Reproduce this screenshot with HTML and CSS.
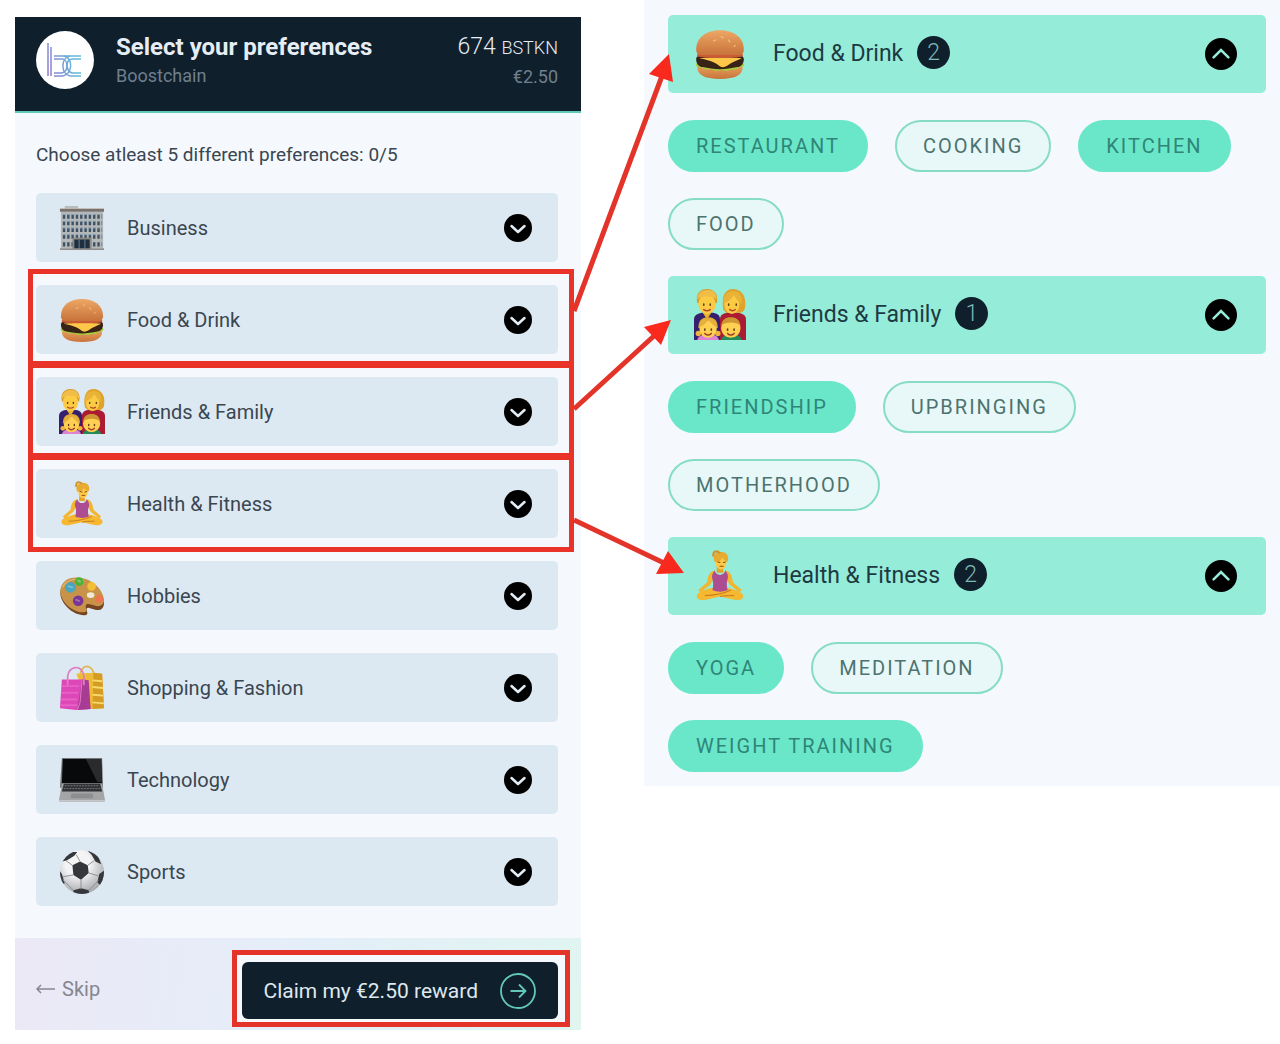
FILE: index.html
```html
<!DOCTYPE html>
<html lang="en">
<head>
    <meta charset="UTF-8">
    <meta name="viewport" content="width=device-width, initial-scale=1.0">
    <title>Select your preferences - Boostchain</title>
    <link rel="stylesheet" href="styles.css">
</head>
<body>

    <!-- Shared icons -->
    <svg class="sprite" aria-hidden="true">
        <symbol id="chevron-down" viewBox="0 0 28 28">
            <circle cx="14" cy="14" r="14" fill="#000"/>
            <path d="M7.500 12 14 18l6.500-6" fill="none" stroke="#e3edf5" stroke-width="2.500" stroke-linecap="round" stroke-linejoin="round"/>
        </symbol>
        <symbol id="chevron-up" viewBox="0 0 28 28">
            <circle cx="14" cy="14" r="14" fill="#000"/>
            <path d="M7.500 17 14 10.500l6.500 6.500" fill="none" stroke="#95ecd9" stroke-width="2.200" stroke-linecap="round"/>
        </symbol>

        <symbol id="business" viewBox="0 0 48 48">
            <path d="M6 1h14v4H6z" fill="#b9bcbd"/>
            <path d="M2 7h44v38H2z" fill="#b5b8b8"/>
            <path d="M1 4h46v3H1z" fill="#77716d"/>
            <path d="M1 3h46v1H1z" fill="#c3bbb2"/>
            <path d="M4 12h41M4 19h41M4 26h41M4 33h41M4 41h41" stroke="#3d5064" stroke-width="4.500" stroke-dasharray="2.500 2"/>
            <path d="M4 10h41M4 17h41M4 24h41M4 31h41" stroke="#8ba8bd" stroke-width="1" stroke-dasharray="2.500 2"/>
            <path d="M14 34h20v12H14z" fill="#8a8984"/>
            <path d="M16 36h16v10H16z" fill="#1f2f40"/>
            <path d="M21 36v10M27 36v10" stroke="#6d8399" stroke-width="1"/>
            <path d="M1 45h46v2H1z" fill="#8f8e8a"/>
        </symbol>

        <symbol id="burger" viewBox="0 0 48 48">
            <defs>
                <linearGradient id="bun" x1="0" y1="0" x2="0" y2="1">
                    <stop offset="0" stop-color="#eda765"/>
                    <stop offset="1" stop-color="#c8733a"/>
                </linearGradient>
            </defs>
            <path d="M3 36c0 7 6 11 21 11s21-4 21-11l-7-3H10z" fill="url(#bun)"/>
            <path d="M1.500 34c1-3 5-4 9-3h27c4-1 8 0 9 3-1 3-4 1-6 3-3 3-5 0-8 2-3 2-5-1-8 0-4 1-6 0-8-1-3-1-5 2-8-1-2-1-6 0-7-3z" fill="#a4cf3b"/>
            <path d="M2 29c0-3 3-4 6-4h32c3 0 6 1 6 4s-2 7-6 7c-5 1-11 2-16 2s-11-1-16-2c-4 0-6-4-6-7z" fill="#392216"/>
            <path d="M5 28c5-1 34-1 39 0-5 2-9 4-12 6-4 3-7 3-10 0-4-3-11-5-17-6z" fill="#ffc747"/>
            <path d="M3 24c5-3 37-3 42 0v2c-5 2-37 2-42 0z" fill="#cb5934"/>
            <path d="M2 20C2 8 12 2 24 2s22 6 22 18c0 3-2 5-5 5H7c-3 0-5-2-5-5z" fill="url(#bun)"/>
            <path d="m25 8 2 1M32 11l1 2M18 12l2-1M37 17l1-1" stroke="#f2c187" stroke-width="1" stroke-linecap="round"/>
        </symbol>

        <symbol id="family" viewBox="0 0 48 48">
            <path d="M0 47V28c0-4 4-6 9-6h7c5 0 8 2 8 6v19z" fill="#35206f"/>
            <path d="M24 47V28c0-4 3-6 8-6h7c5 0 9 2 9 6v19z" fill="#ab1b33"/>
            <path d="m8 22 4 6 4-6z" fill="#e9b52e"/>
            <path d="M27 19C25 6 29 0 36 0s13 6 11 17c0 3-3 5-5 5H30z" fill="#dfa22a"/>
            <path d="M3 13C1 4 6 0 12 0s11 4 9 13z" fill="#d69c2b"/>
            <ellipse cx="12" cy="14" rx="8" ry="9" fill="#fbcb43"/>
            <ellipse cx="35" cy="14" rx="7" ry="9" fill="#fbcb43"/>
            <path d="M3 10C3 3 8 1 13 1c5 0 8 3 8 9-3-3-6-3-9-3-4 0-6 0-9 3z" fill="#efbd48"/>
            <path d="M27 13c5-1 8-4 10-8 1 4 4 6 7 9 1-9-3-12-8-12-6 0-9 5-9 11z" fill="#e9b33a"/>
            <path d="M9 14v1M15 14v1M32 14v1M39 14v1" stroke="#664014" stroke-width="1.500" stroke-linecap="round"/>
            <path d="M9 19q3 2 6 0M33 19q3 2 5 0" fill="none" stroke="#b6462b" stroke-width="1.400" stroke-linecap="round"/>
            <path d="M3 47c1-4 5-5 10-5s9 1 10 5z" fill="#dd82d2"/>
            <path d="M25 47c1-4 5-5 10-5s8 1 9 5z" fill="#25895a"/>
            <circle cx="4" cy="41" r="2.500" fill="#eeb53a"/>
            <circle cx="22" cy="41" r="2.500" fill="#eeb53a"/>
            <path d="M4 36c0-8 4-10 9-10s9 2 9 10z" fill="#d89f2c"/>
            <ellipse cx="13" cy="37" rx="8" ry="8" fill="#ffd052"/>
            <path d="M5 35c4-1 7-4 8-7 2 3 5 6 8 7 0-7-4-8-8-8s-8 1-8 8z" fill="#e6b03c"/>
            <ellipse cx="34" cy="36" rx="9" ry="9" fill="#ffd052"/>
            <path d="M25 34c1-6 4-8 9-8s8 2 9 8c-4-4-14-4-18 0z" fill="#cf9733"/>
            <path d="M10 37v1M16 37v1M31 37v1M37 37v1" stroke="#664014" stroke-width="1.500" stroke-linecap="round"/>
            <path d="M10 41q3 3 6 0M31 41q3 3 6 0" fill="none" stroke="#a13e26" stroke-width="1.400" stroke-linecap="round"/>
        </symbol>

        <symbol id="yoga" viewBox="0 0 48 48">
            <path d="M19 19c-5 1-6 5-7 11l-8 7 2 2 9-7 5-9zM29 19c5 1 6 5 7 11l8 7-2 2-9-7-5-9z" fill="#f2b52d"/>
            <path d="M21 14h6v7h-6z" fill="#e5a428"/>
            <path d="M16 35c-5 1-12 4-13 6-2 4 3 6 8 5l13-3 13 3c5 1 10-1 8-5-1-2-8-5-13-6z" fill="#f6b731"/>
            <path d="M10 42c8 0 18-2 24-5M24 43c4-1 8-1 13-1" fill="none" stroke="#c87c20" stroke-width="1"/>
            <path d="M19 19c1 3 3 4 5 4s4-1 5-4c2 3 3 5 2 8-1 3-1 6 0 10-4 2-10 2-14 0 1-4 1-7 0-10-1-3 0-5 2-8z" fill="#ac4c91"/>
            <ellipse cx="25" cy="11" rx="5" ry="7" fill="#ffc948"/>
            <path d="M19 11c-2-5 0-9 5-9 6-1 9 4 7 9-2-1-4-2-5-4-1 3-3 4-7 4z" fill="#e8ab31"/>
            <path d="M18 6c-1-5 3-6 6-3" fill="none" stroke="#d39228" stroke-width="2"/>
            <path d="m22 11 2 .500M27 11.500l2-.500M24 15h3" stroke="#86521c" stroke-width="1" stroke-linecap="round"/>
        </symbol>

        <symbol id="palette" viewBox="0 0 48 48">
            <path d="M2 17C5 7 16 4 27 8c10 3 19 12 20 23 0 7-5 9-10 7-4-1-7-3-8-1-1 3 3 6-2 7C14 45-2 29 2 17z" fill="#754521"/>
            <path d="M2 15C5 5 16 3 27 6c10 3 19 12 20 22 0 6-5 8-10 6-4-1-8-3-9 0-1 3 3 6-2 7C14 42-2 27 2 15z" fill="#c89248"/>
            <path d="M4 15C7 7 16 5 26 8" fill="none" stroke="#e1b46e" stroke-width="1.500"/>
            <ellipse cx="33" cy="23" rx="4" ry="3" fill="#efe9d8"/>
            <circle cx="12" cy="15" r="5.500" fill="#47a6bd"/>
            <circle cx="21" cy="9" r="4.500" fill="#4db338"/>
            <circle cx="34" cy="14" r="4.500" fill="#f5bf35"/>
            <ellipse cx="42" cy="27" rx="4" ry="4" fill="#ec7552"/>
            <circle cx="20" cy="29" r="5.500" fill="#783796"/>
            <path d="m10 14 4 1M20 8l2 1M18 28l3 1" stroke="#fff" stroke-opacity=".300" stroke-width="2" stroke-linecap="round"/>
        </symbol>

        <symbol id="bags" viewBox="0 0 48 48">
            <path d="M22 12C22-2 36-2 37 12" fill="none" stroke="#ddb64f" stroke-width="1.800"/>
            <path d="m18 9 18-1 9 1 2 36-14 1z" fill="#eebb36"/>
            <path d="m36 8 9 1 2 36-12 1z" fill="#d49b25"/>
            <path d="m35 16 10 1M35 23l11 1M35 31l11 1M35 39l12 1" stroke="#f7da69" stroke-width="2"/>
            <path d="M3 15h25l5 31-15 1-17-2z" fill="#dd47b7"/>
            <path d="m24 15 7 1 2 30-14 1z" fill="#a83b93"/>
            <path d="m24 16-2 23-3 8" fill="none" stroke="#e37bc5" stroke-width="1"/>
            <path d="M3 22h18M2 29h18M2 36h17M2 42h17" stroke="#e862c6" stroke-width="2"/>
            <path d="M9 21V12C10 0 25-1 26 12v9" fill="none" stroke="#e07cc5" stroke-width="1.800"/>
        </symbol>

        <symbol id="laptop" viewBox="0 0 48 48">
            <path d="M3 1h42l1 31H1z" fill="#727579"/>
            <path d="M4 2h40l1 25H3z" fill="#08090a"/>
            <path d="M28 2h16l1 24h-5z" fill="#292b2d"/>
            <path d="M3 28h42l3 17H0z" fill="#a3a5a7"/>
            <path d="M5 28h38l2 8H3z" fill="#303235"/>
            <path d="M6 30h36M5 33h38" stroke="#74777a" stroke-width="1" stroke-dasharray="2 1"/>
            <path d="M13 38h22l1 5H12z" fill="#8c8e90"/>
            <path d="M0 45h48v2H0z" fill="#bfc1c3"/>
        </symbol>

        <symbol id="ball" viewBox="0 0 48 48">
            <defs>
                <radialGradient id="ball-shade" cx=".4" cy=".3" r=".7">
                    <stop offset=".4" stop-color="#f4f4f5"/>
                    <stop offset="1" stop-color="#a7a9ac"/>
                </radialGradient>
                <clipPath id="ball-edge"><circle cx="24" cy="24" r="23"/></clipPath>
            </defs>
            <circle cx="24" cy="24" r="23" fill="url(#ball-shade)"/>
            <g clip-path="url(#ball-edge)">
                <path d="m14 17 8-4 8 4 1 8-8 7-8-5zM7 3h12l-3 4-8 5-5 1zM29 1l11 4 4 11-6-3-4-7zM0 22l3 4 3 10-7 1zM48 22l-6 4-2 9 5 4 4-4zM15 43l8-2 8 2 1 6H15z" fill="#35373d"/>
                <path d="m22 13-4-7M30 17l7-5M31 25l10 3M23 32v10M15 27 4 29M14 17 7 12M4 32l11 11M41 33 31 43" fill="none" stroke="#8d9094" stroke-width="1"/>
            </g>
        </symbol>
    </svg>

    <main class="page">

        <section class="panel preferences">
            <header class="topbar">
                <svg class="logo" viewBox="0 0 58 58" role="img" aria-label="Boostchain">
                    <defs>
                        <linearGradient id="logo-line" gradientUnits="userSpaceOnUse" x1="11" y1="36" x2="38" y2="28">
                            <stop offset="0" stop-color="#8f7bd0"/>
                            <stop offset="1" stop-color="#63b9da"/>
                        </linearGradient>
                    </defs>
                    <circle cx="29" cy="29" r="29" fill="#fff"/>
                    <g fill="none" stroke="url(#logo-line)" stroke-width="1.500">
                        <path d="M12 12v33M15 16v29"/>
                        <path d="M18 25h27M18 28h8M36 28h9"/>
                        <path d="M26 28c6 0 7 12 0 14h-8M28 25c10 3 8 18-1 20h-9"/>
                        <path d="M34 25c-10 2-9 18 0 20h11M36 28c-7 1-6 12 0 14h9"/>
                    </g>
                </svg>
                <div class="heading">
                    <h1>Select your preferences</h1>
                    <p>Boostchain</p>
                </div>
                <div class="balance">
                    <p class="tokens">674 <small>BSTKN</small></p>
                    <p>€2.50</p>
                </div>
            </header>

            <div class="content">
                <p class="intro">Choose atleast 5 different preferences: 0/5</p>
                <ul class="categories">
                    <li><button type="button" class="category"><svg class="emoji"><use href="#business"/></svg><span>Business</span><svg class="chevron"><use href="#chevron-down"/></svg></button></li>
                    <li class="marked"><button type="button" class="category"><svg class="emoji"><use href="#burger"/></svg><span>Food &amp; Drink</span><svg class="chevron"><use href="#chevron-down"/></svg></button></li>
                    <li class="marked"><button type="button" class="category"><svg class="emoji"><use href="#family"/></svg><span>Friends &amp; Family</span><svg class="chevron"><use href="#chevron-down"/></svg></button></li>
                    <li class="marked"><button type="button" class="category"><svg class="emoji"><use href="#yoga"/></svg><span>Health &amp; Fitness</span><svg class="chevron"><use href="#chevron-down"/></svg></button></li>
                    <li><button type="button" class="category"><svg class="emoji"><use href="#palette"/></svg><span>Hobbies</span><svg class="chevron"><use href="#chevron-down"/></svg></button></li>
                    <li><button type="button" class="category"><svg class="emoji"><use href="#bags"/></svg><span>Shopping &amp; Fashion</span><svg class="chevron"><use href="#chevron-down"/></svg></button></li>
                    <li><button type="button" class="category"><svg class="emoji"><use href="#laptop"/></svg><span>Technology</span><svg class="chevron"><use href="#chevron-down"/></svg></button></li>
                    <li><button type="button" class="category"><svg class="emoji"><use href="#ball"/></svg><span>Sports</span><svg class="chevron"><use href="#chevron-down"/></svg></button></li>
                </ul>
            </div>

            <footer class="actions">
                <a href="#" class="skip">
                    <svg viewBox="0 0 20 12" aria-hidden="true"><path d="M19 6H1M5 2 1 6l4 4" fill="none" stroke="currentColor" stroke-width="1.500"/></svg>
                    Skip
                </a>
                <div class="claim-wrap">
                    <button type="button" class="claim">
                        Claim my €2.50 reward
                        <svg viewBox="0 0 36 36" aria-hidden="true"><g fill="none" stroke="#62c9b8" stroke-width="1.800"><circle cx="18" cy="18" r="17"/><path d="M10.500 18h15M19 11.500l6.500 6.500-6.500 6.500"/></g></svg>
                    </button>
                </div>
            </footer>
        </section>

        <section class="panel details">
            <div class="group">
                <button type="button" class="category open"><svg class="emoji"><use href="#burger"/></svg><span>Food &amp; Drink</span><span class="count">2</span><svg class="chevron"><use href="#chevron-up"/></svg></button>
                <div class="tags">
                    <button type="button" class="tag selected">RESTAURANT</button>
                    <button type="button" class="tag">COOKING</button>
                    <button type="button" class="tag selected">KITCHEN</button>
                    <button type="button" class="tag">FOOD</button>
                </div>
            </div>
            <div class="group">
                <button type="button" class="category open"><svg class="emoji"><use href="#family"/></svg><span>Friends &amp; Family</span><span class="count">1</span><svg class="chevron"><use href="#chevron-up"/></svg></button>
                <div class="tags">
                    <button type="button" class="tag selected">FRIENDSHIP</button>
                    <button type="button" class="tag">UPBRINGING</button>
                    <button type="button" class="tag">MOTHERHOOD</button>
                </div>
            </div>
            <div class="group">
                <button type="button" class="category open"><svg class="emoji"><use href="#yoga"/></svg><span>Health &amp; Fitness</span><span class="count">2</span><svg class="chevron"><use href="#chevron-up"/></svg></button>
                <div class="tags">
                    <button type="button" class="tag selected">YOGA</button>
                    <button type="button" class="tag">MEDITATION</button>
                    <button type="button" class="tag selected">WEIGHT TRAINING</button>
                </div>
            </div>
        </section>

        <!-- Arrows from each marked category to its open group -->
        <svg class="arrows" viewBox="0 0 1280 620" aria-hidden="true">
            <path d="M574 311 662 76M574 409l81-74M574 520l90 43" stroke="#e4342a" stroke-width="5"/>
            <path d="M669 54 649 74l24 8zM671 320l-27 7 17 18zM684 573l-16-22-12 23z" fill="#f9291d"/>
        </svg>
    </main>

</body>
</html>
```

FILE: styles.css
```css
* {
    margin: 0;
    padding: 0;
    box-sizing: border-box;
}

body {
    font-family: Roboto, "Liberation Sans", sans-serif;
    font-size: 20px;
    line-height: 28px;
    background-color: #fff;
    color: #3a4650;
}

button {
    font: inherit;
    border: none;
    cursor: pointer;
}

ul {
    list-style: none;
}

.sprite {
    position: absolute;
    width: 0;
    height: 0;
}

.page {
    position: relative;
    display: grid;
    grid-template-columns: 566fr 636fr;
    align-items: start;
    gap: 63px;
    padding-left: 15px;
}

.panel {
    background-color: #f5f9fd;
}

/* Left panel */
.preferences {
    margin-top: 17px;
}

.topbar {
    display: flex;
    align-items: flex-start;
    padding: 14px 23px 21px 21px;
    background-color: #101f2c;
    border-bottom: 2px solid #62c9b8;
}

.logo {
    width: 58px;
    height: 58px;
    margin-right: 22px;
}

.heading,
.balance {
    flex: 1;
    color: #6f7f8c;
    font-size: 18px;
    line-height: 26px;
}

.balance {
    flex: none;
    text-align: right;
}

h1,
.tokens {
    font-size: 24px;
    line-height: 32px;
    color: #e6edf5;
}

.tokens {
    font-size: 23px;
    font-weight: 300;
}

.tokens small {
    font-size: 18px;
}

.content {
    padding: 28px 23px 32px 21px;
}

.intro {
    margin-bottom: 24px;
    font-size: 19px;
}

.categories {
    display: grid;
    gap: 23px;
}

.category {
    display: flex;
    align-items: center;
    width: 100%;
    height: 69px;
    padding: 0 26px 0 22px;
    background-color: #dde9f2;
    border-radius: 5px;
    color: #3a4650;
    text-align: left;
}

.emoji {
    width: 48px;
    height: 46px;
    margin-right: 21px;
}

.chevron {
    width: 28px;
    height: 28px;
    margin-left: auto;
}

.marked {
    position: relative;
}

.marked::after {
    content: "";
    position: absolute;
    inset: -16px -16px -14px -8px;
    border: 5px solid #ea3328;
    pointer-events: none;
}

.actions {
    display: flex;
    align-items: center;
    justify-content: space-between;
    padding: 12px 11px 3px 21px;
    background: linear-gradient(100deg, #ece8f6, #e4eef9 50%, #e0f5f0);
}

.skip {
    display: flex;
    align-items: center;
    gap: 6px;
    color: #85868f;
    text-decoration: none;
}

.skip svg {
    width: 20px;
    height: 12px;
}

.claim-wrap {
    padding: 7px 7px 3px 5px;
    background-color: #f5f9fd;
    border: 5px solid #e4342a;
}

.claim {
    display: flex;
    align-items: center;
    gap: 22px;
    height: 57px;
    padding: 0 22px;
    background-color: #101f2c;
    border-radius: 6px;
    color: #dfe8ee;
    font-size: 21px;
}

.claim svg {
    width: 36px;
    height: 36px;
}

/* Right panel */
.details {
    display: grid;
    gap: 26px;
    padding: 15px 14px 14px 24px;
}

.group {
    display: grid;
    gap: 27px;
}

.open {
    height: 78px;
    padding: 0 29px 0 25px;
    background-color: #95ecd9;
    color: #1d3a42;
    font-size: 23px;
}

.open .emoji {
    width: 54px;
    height: 52px;
    margin-right: 26px;
}

.open .chevron {
    width: 32px;
    height: 32px;
}

.count {
    width: 33px;
    margin: 0 0 4px 14px;
    background-color: #101f2c;
    border-radius: 50%;
    color: #7fb9b8;
    font-weight: 300;
    line-height: 33px;
    text-align: center;
}

.tags {
    display: flex;
    flex-wrap: wrap;
    gap: 26px 27px;
}

.tag {
    height: 52px;
    padding: 0 26px;
    background-color: #e8f8f8;
    border: 2px solid #86dcc4;
    border-radius: 26px;
    color: #4d736f;
    font-size: 20px;
    letter-spacing: 2px;
}

.selected {
    background-color: #6ae7c9;
    border-color: #6ae7c9;
    color: #2f8578;
}

.arrows {
    position: absolute;
    top: 0;
    left: 0;
    width: 100%;
    pointer-events: none;
}
```
